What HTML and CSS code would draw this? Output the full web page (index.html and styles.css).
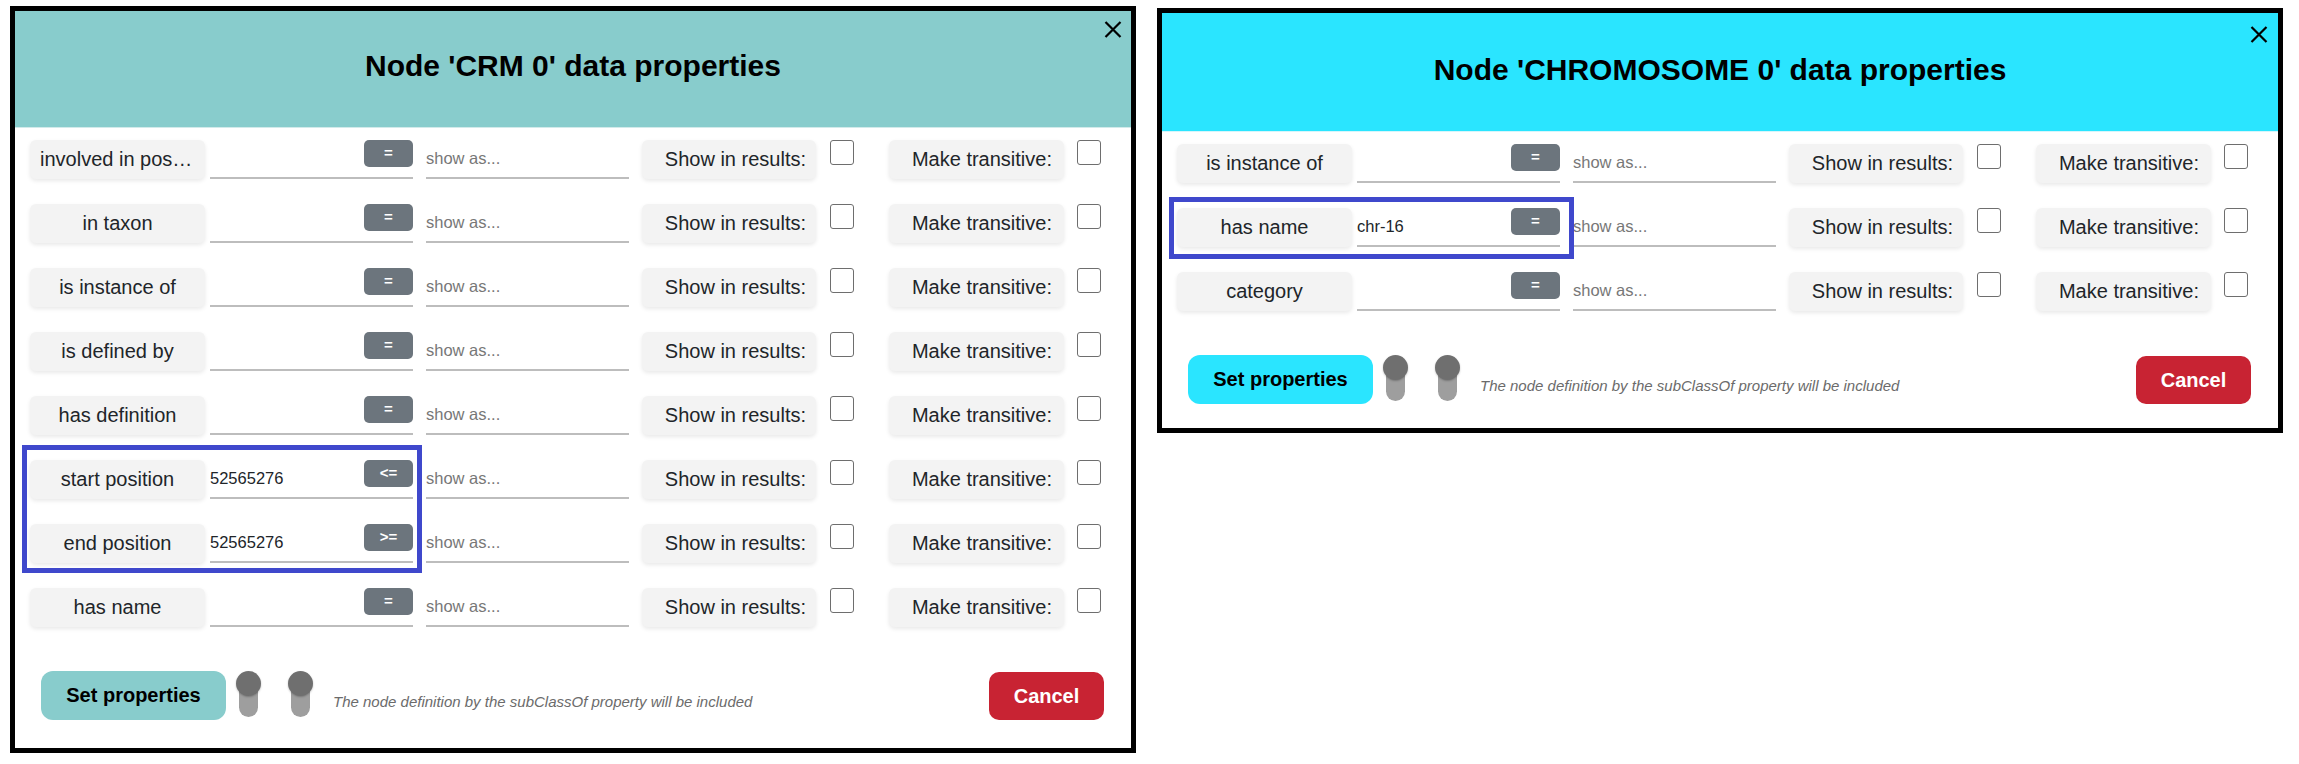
FILE: index.html
```html
<!DOCTYPE html>
<html lang="en">
<head>
<meta charset="utf-8">
<title>Node data properties</title>
<link rel="stylesheet" href="styles.css">
</head>
<body>
<div class="page">
  <section class="modal modal-crm">
    <header class="modal-header">
      <h2 class="modal-title">Node 'CRM 0' data properties</h2>
      <button class="close" aria-label="Close"><svg viewBox="0 0 18 17" width="18" height="17"><path d="M1.5 1L16.5 16M16.5 1L1.5 16" stroke="#000" stroke-width="2.2" fill="none"/></svg></button>
    </header>
    <div class="modal-body">
      <div class="prop-row">
        <div class="prop-label prop-label-left" title="involved in positive regulation of">involved in pos…</div>
        <div class="value-cell"><input class="line-input" type="text" value=""><button class="op-btn">=</button></div>
        <input class="line-input show-as" type="text" placeholder="show as...">
        <div class="opt-label">Show in results:</div>
        <input class="check" type="checkbox">
        <div class="opt-label make">Make transitive:</div>
        <input class="check check-last" type="checkbox">
      </div>
      <div class="prop-row">
        <div class="prop-label">in taxon</div>
        <div class="value-cell"><input class="line-input" type="text" value=""><button class="op-btn">=</button></div>
        <input class="line-input show-as" type="text" placeholder="show as...">
        <div class="opt-label">Show in results:</div>
        <input class="check" type="checkbox">
        <div class="opt-label make">Make transitive:</div>
        <input class="check check-last" type="checkbox">
      </div>
      <div class="prop-row">
        <div class="prop-label">is instance of</div>
        <div class="value-cell"><input class="line-input" type="text" value=""><button class="op-btn">=</button></div>
        <input class="line-input show-as" type="text" placeholder="show as...">
        <div class="opt-label">Show in results:</div>
        <input class="check" type="checkbox">
        <div class="opt-label make">Make transitive:</div>
        <input class="check check-last" type="checkbox">
      </div>
      <div class="prop-row">
        <div class="prop-label">is defined by</div>
        <div class="value-cell"><input class="line-input" type="text" value=""><button class="op-btn">=</button></div>
        <input class="line-input show-as" type="text" placeholder="show as...">
        <div class="opt-label">Show in results:</div>
        <input class="check" type="checkbox">
        <div class="opt-label make">Make transitive:</div>
        <input class="check check-last" type="checkbox">
      </div>
      <div class="prop-row">
        <div class="prop-label">has definition</div>
        <div class="value-cell"><input class="line-input" type="text" value=""><button class="op-btn">=</button></div>
        <input class="line-input show-as" type="text" placeholder="show as...">
        <div class="opt-label">Show in results:</div>
        <input class="check" type="checkbox">
        <div class="opt-label make">Make transitive:</div>
        <input class="check check-last" type="checkbox">
      </div>
      <div class="prop-row">
        <div class="prop-label">start position</div>
        <div class="value-cell"><input class="line-input" type="text" value="52565276"><button class="op-btn">&lt;=</button></div>
        <input class="line-input show-as" type="text" placeholder="show as...">
        <div class="opt-label">Show in results:</div>
        <input class="check" type="checkbox">
        <div class="opt-label make">Make transitive:</div>
        <input class="check check-last" type="checkbox">
      </div>
      <div class="prop-row">
        <div class="prop-label">end position</div>
        <div class="value-cell"><input class="line-input" type="text" value="52565276"><button class="op-btn">&gt;=</button></div>
        <input class="line-input show-as" type="text" placeholder="show as...">
        <div class="opt-label">Show in results:</div>
        <input class="check" type="checkbox">
        <div class="opt-label make">Make transitive:</div>
        <input class="check check-last" type="checkbox">
      </div>
      <div class="prop-row">
        <div class="prop-label">has name</div>
        <div class="value-cell"><input class="line-input" type="text" value=""><button class="op-btn">=</button></div>
        <input class="line-input show-as" type="text" placeholder="show as...">
        <div class="opt-label">Show in results:</div>
        <input class="check" type="checkbox">
        <div class="opt-label make">Make transitive:</div>
        <input class="check check-last" type="checkbox">
      </div>
    </div>
    <footer class="modal-footer">
      <button class="btn-set">Set properties</button>
      <span class="toggle"><span class="knob"></span></span>
      <span class="toggle toggle-second"><span class="knob"></span></span>
      <span class="note">The node definition by the subClassOf property will be included</span>
      <button class="btn-cancel">Cancel</button>
    </footer>
    <div class="annot annot-crm"></div>
  </section>

  <section class="modal modal-chr">
    <header class="modal-header">
      <h2 class="modal-title">Node 'CHROMOSOME 0' data properties</h2>
      <button class="close" aria-label="Close"><svg viewBox="0 0 18 17" width="18" height="17"><path d="M1.5 1L16.5 16M16.5 1L1.5 16" stroke="#000" stroke-width="2.2" fill="none"/></svg></button>
    </header>
    <div class="modal-body">
      <div class="prop-row">
        <div class="prop-label">is instance of</div>
        <div class="value-cell"><input class="line-input" type="text" value=""><button class="op-btn">=</button></div>
        <input class="line-input show-as" type="text" placeholder="show as...">
        <div class="opt-label">Show in results:</div>
        <input class="check" type="checkbox">
        <div class="opt-label make">Make transitive:</div>
        <input class="check check-last" type="checkbox">
      </div>
      <div class="prop-row">
        <div class="prop-label">has name</div>
        <div class="value-cell"><input class="line-input" type="text" value="chr-16"><button class="op-btn">=</button></div>
        <input class="line-input show-as" type="text" placeholder="show as...">
        <div class="opt-label">Show in results:</div>
        <input class="check" type="checkbox">
        <div class="opt-label make">Make transitive:</div>
        <input class="check check-last" type="checkbox">
      </div>
      <div class="prop-row">
        <div class="prop-label">category</div>
        <div class="value-cell"><input class="line-input" type="text" value=""><button class="op-btn">=</button></div>
        <input class="line-input show-as" type="text" placeholder="show as...">
        <div class="opt-label">Show in results:</div>
        <input class="check" type="checkbox">
        <div class="opt-label make">Make transitive:</div>
        <input class="check check-last" type="checkbox">
      </div>
    </div>
    <footer class="modal-footer">
      <button class="btn-set">Set properties</button>
      <span class="toggle"><span class="knob"></span></span>
      <span class="toggle toggle-second"><span class="knob"></span></span>
      <span class="note">The node definition by the subClassOf property will be included</span>
      <button class="btn-cancel">Cancel</button>
    </footer>
    <div class="annot annot-chr"></div>
  </section>
</div>
</body>
</html>
```

FILE: styles.css
```css
* { box-sizing: border-box; }

html, body {
  margin: 0;
  background: #ffffff;
}

body {
  font-family: "Liberation Sans", Arial, sans-serif;
  color: #212529;
}

.page {
  display: flex;
  align-items: flex-start;
  gap: 21px;
  padding: 6px 0 0 10px;
}

.modal {
  position: relative;
  width: 1126px;
  border: 5px solid #000;
  background: #fff;
  display: flex;
  flex-direction: column;
}

.modal-chr { margin-top: 2px; }

.modal-header {
  position: relative;
  height: 117px;
  background: #88cccc;
  border-bottom: 1px solid #d2eaea;
  display: flex;
  align-items: center;
  justify-content: center;
  padding-bottom: 6px;
}

.modal-chr .modal-header {
  height: 119px;
  background: #2ae5ff;
  border-bottom-color: #d6f6fb;
  padding-bottom: 4px;
}

.modal-title {
  margin: 0;
  font-size: 30px;
  font-weight: bold;
  color: #000;
}

.close {
  position: absolute;
  top: 10px;
  right: 9px;
  width: 18px;
  height: 17px;
  padding: 0;
  border: 0;
  background: none;
  display: block;
}

.close svg { display: block; }

.modal-chr .close { top: 13px; right: 10px; }

.modal-body {
  display: flex;
  flex-direction: column;
  gap: 25px;
  padding: 12px 15px 0;
}

.prop-row {
  display: flex;
  align-items: flex-start;
  height: 39px;
}

.prop-label {
  width: 175px;
  height: 39px;
  flex: none;
  padding: 0 8px;
  background: #f3f3f3;
  border-radius: 6px;
  box-shadow: 0 2px 4px rgba(0, 0, 0, 0.09);
  font-size: 20px;
  line-height: 39px;
  text-align: center;
  white-space: nowrap;
  color: #212529;
}

.prop-label-left {
  text-align: left;
  padding-left: 10px;
}

.value-cell {
  position: relative;
  width: 203px;
  height: 39px;
  flex: none;
  margin-left: 5px;
}

.line-input {
  display: block;
  width: 100%;
  height: 39px;
  margin: 0;
  padding: 0;
  border: 0;
  border-bottom: 2px solid #bdbdbd;
  background: transparent;
  outline: none;
  font-family: "Liberation Sans", Arial, sans-serif;
  font-size: 16.5px;
  color: #212529;
}

.line-input::placeholder { color: #777; }

.show-as {
  width: 203px;
  flex: none;
  margin-left: 13px;
}

.op-btn {
  position: absolute;
  top: 0;
  right: 0;
  width: 49px;
  height: 27px;
  padding: 0 0 3px;
  border: 0;
  border-radius: 5px;
  background: #6c757d;
  color: #fff;
  font-family: "Liberation Sans", Arial, sans-serif;
  font-weight: bold;
  font-size: 15px;
  line-height: 1;
}

.opt-label {
  width: 174px;
  height: 39px;
  flex: none;
  margin-left: 13px;
  padding-right: 10px;
  background: #f3f3f3;
  border-radius: 6px;
  box-shadow: 0 2px 4px rgba(0, 0, 0, 0.09);
  font-size: 20px;
  line-height: 39px;
  text-align: right;
  white-space: nowrap;
  color: #212529;
}

.opt-label.make {
  width: 175px;
  margin-left: 35px;
  padding-right: 12px;
}

.check {
  appearance: none;
  -webkit-appearance: none;
  width: 24px;
  height: 25px;
  flex: none;
  margin: 0 0 0 14px;
  border: 1.5px solid #6e6e6e;
  border-radius: 3px;
  background: #fff;
}

.check-last { margin-left: 13px; }

.modal-footer {
  display: flex;
  align-items: flex-start;
  padding: 44px 27px 28px 26px;
}

.modal-chr .modal-footer { padding-bottom: 24px; }

.btn-set {
  width: 185px;
  height: 49px;
  flex: none;
  border: 0;
  border-radius: 12px;
  background: #88cccc;
  color: #000;
  font-family: "Liberation Sans", Arial, sans-serif;
  font-weight: bold;
  font-size: 20px;
}

.modal-chr .btn-set { background: #2ae5ff; }

.toggle {
  position: relative;
  width: 25px;
  height: 49px;
  flex: none;
  margin-left: 10px;
}

.toggle-second { margin-left: 27px; }

.toggle::before {
  content: "";
  position: absolute;
  left: 3px;
  top: 6px;
  width: 19px;
  height: 40px;
  border-radius: 10px;
  background: #9e9e9e;
}

.knob {
  position: absolute;
  left: 0;
  top: 0;
  width: 25px;
  height: 25px;
  border-radius: 50%;
  background: #6f6f6f;
  box-shadow: 0 1px 2px rgba(0, 0, 0, 0.25);
}

.note {
  margin-left: 20px;
  margin-top: 22px;
  font-size: 15px;
  line-height: 18px;
  font-style: italic;
  color: #6b6b6b;
  white-space: nowrap;
}

.btn-cancel {
  margin-left: auto;
  margin-top: 1px;
  width: 115px;
  height: 48px;
  flex: none;
  border: 0;
  border-radius: 10px;
  background: #c82333;
  color: #fff;
  font-family: "Liberation Sans", Arial, sans-serif;
  font-weight: bold;
  font-size: 20px;
}

.annot {
  position: absolute;
  border: 5px solid #3f48cc;
  pointer-events: none;
}

.annot-crm {
  left: 7px;
  top: 434px;
  width: 400px;
  height: 128px;
}

.annot-chr {
  left: 7px;
  top: 184px;
  width: 405px;
  height: 62px;
}
```
